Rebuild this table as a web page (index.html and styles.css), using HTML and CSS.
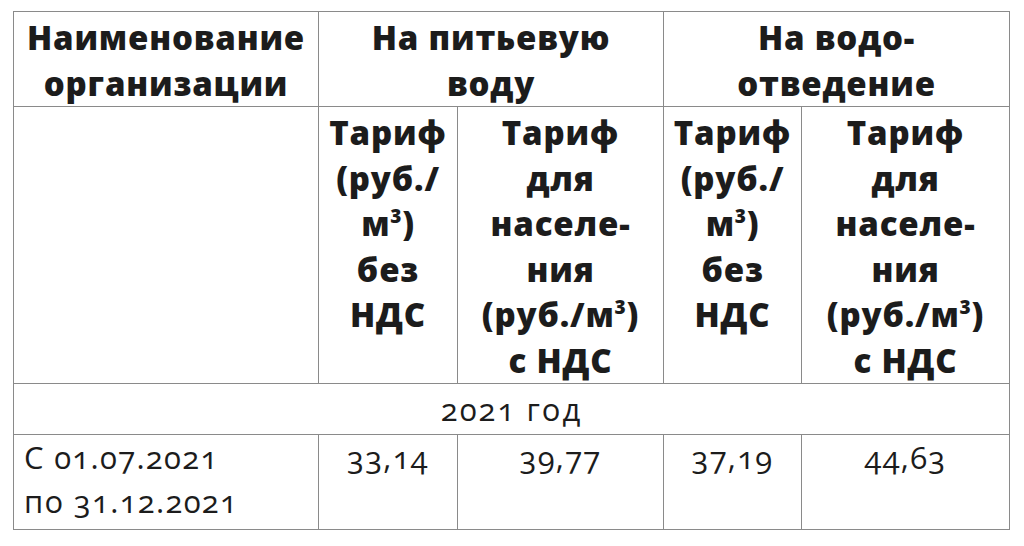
FILE: index.html
```html
<!DOCTYPE html>
<html lang="ru">
<head>
<meta charset="utf-8">
<link rel="stylesheet" href="styles.css">
</head>
<body>
<table class="tariffs">
  <colgroup>
    <col class="c-name"><col class="c-a"><col class="c-b"><col class="c-c"><col class="c-d">
  </colgroup>
  <tr class="row-head">
    <th>Наименование<br>организации</th>
    <th colspan="2">На питьевую<br>воду</th>
    <th colspan="2">На водо-<br>отведение</th>
  </tr>
  <tr class="row-sub">
    <th></th>
    <th>Тариф<br>(руб./<br>м<sup>3</sup>)<br>без<br>НДС</th>
    <th>Тариф<br>для<br>населе-<br>ния<br>(руб./м<sup>3</sup>)<br>с НДС</th>
    <th>Тариф<br>(руб./<br>м<sup>3</sup>)<br>без<br>НДС</th>
    <th>Тариф<br>для<br>населе-<br>ния<br>(руб./м<sup>3</sup>)<br>с НДС</th>
  </tr>
  <tr class="row-year">
    <td colspan="5">2021 год</td>
  </tr>
  <tr class="row-data">
    <td class="period">С 01.07.2021<br>по 31.12.2021</td>
    <td>33,14</td>
    <td>39,77</td>
    <td>37,19</td>
    <td>44,63</td>
  </tr>
</table>
</body>
</html>
```
FILE: styles.css
```css
html, body {
  margin: 0;
  padding: 0;
  background: #ffffff;
}
body {
  padding: 11px 0 0 13px;
  font-family: "Open Sans", "Noto Sans", sans-serif;
  color: #1c1c1c;
}
.tariffs {
  border-collapse: collapse;
  table-layout: fixed;
  width: 997px;
}
.c-name { width: 305px; }
.c-a { width: 139px; }
.c-b { width: 206px; }
.c-c { width: 138px; }
.c-d { width: 208px; }
.tariffs th,
.tariffs td {
  border: 1.5px solid #8a8a8a;
  text-align: center;
  padding: 0;
}
.tariffs th {
  font-weight: 800;
  font-size: 33px;
  line-height: 45.5px;
  letter-spacing: 0.8px;
}
.tariffs sup {
  font-size: 19px;
  line-height: 0;
  vertical-align: 13px;
}
.row-head th {
  height: 95px;
  vertical-align: top;
  padding-top: 3px;
  box-sizing: border-box;
}
.row-sub th {
  height: 277px;
  vertical-align: top;
  padding-top: 3px;
  box-sizing: border-box;
}
.row-year td {
  height: 50px;
  font-size: 31px;
  line-height: 32px;
  letter-spacing: 2px;
  vertical-align: middle;
  font-variant-numeric: oldstyle-nums;
}
.row-data td {
  height: 95px;
  font-size: 31px;
  line-height: 44px;
  letter-spacing: 1.3px;
  vertical-align: top;
  padding-top: 0;
  box-sizing: border-box;
  font-variant-numeric: oldstyle-nums;
}
.row-data td.period {
  text-align: left;
  padding-left: 10px;
}
```
